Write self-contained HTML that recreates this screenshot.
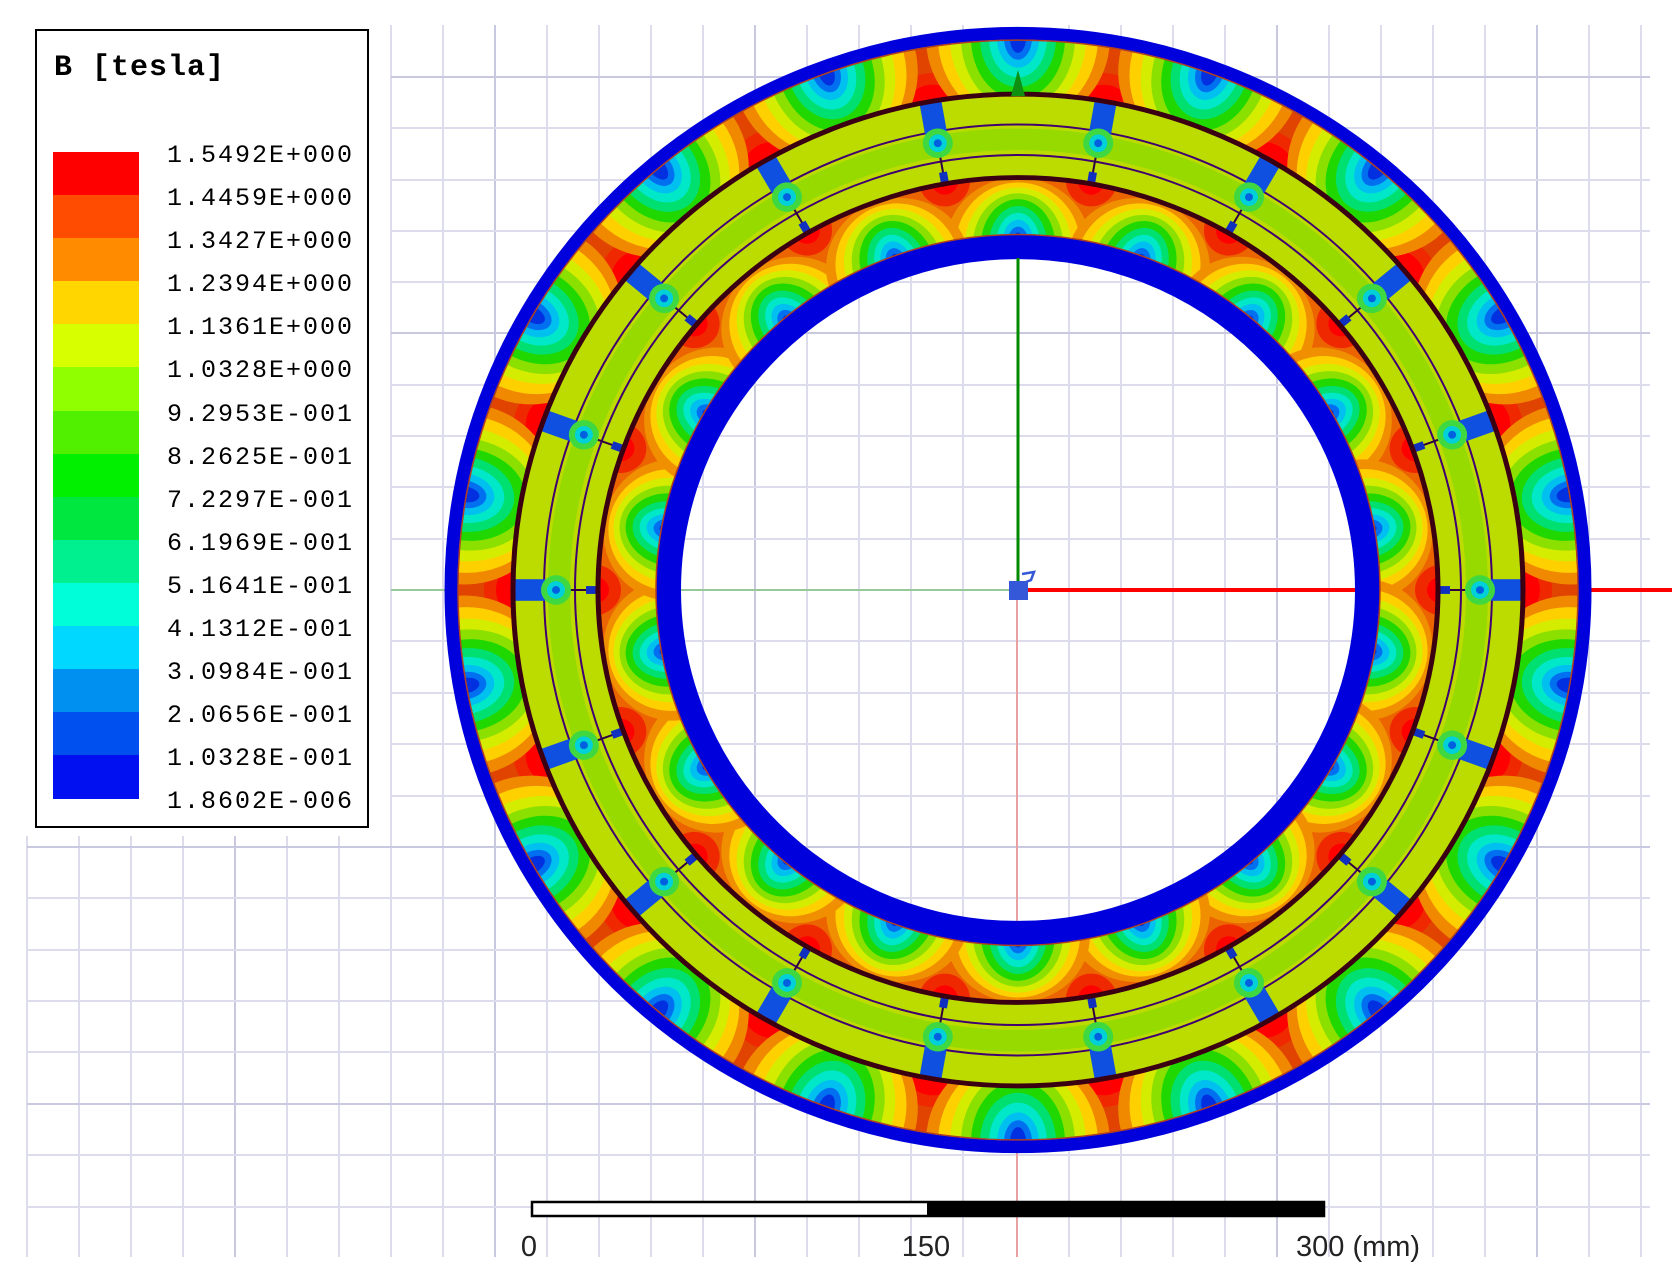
<!DOCTYPE html>
<html><head><meta charset="utf-8"><style>
html,body{margin:0;padding:0;background:#fff;}
svg{display:block;}
</style></head><body>
<svg width="1672" height="1283" viewBox="0 0 1672 1283" xmlns="http://www.w3.org/2000/svg" xmlns:xlink="http://www.w3.org/1999/xlink">
<defs>
  <clipPath id="statClip"><path clip-rule="evenodd" d="M-560,0a560,560 0 1,0 1120,0a560,560 0 1,0 -1120,0ZM-506,0a506,506 0 1,0 1012,0a506,506 0 1,0 -1012,0Z"/></clipPath>
  <clipPath id="rotClip"><path clip-rule="evenodd" d="M-419,0a419,419 0 1,0 838,0a419,419 0 1,0 -838,0ZM-362,0a362,362 0 1,0 724,0a362,362 0 1,0 -724,0Z"/></clipPath>
  <g id="sred"><ellipse cx="0" cy="-500" rx="42" ry="34" fill="#f02800"/><ellipse cx="0" cy="-500" rx="26" ry="22" fill="#ff0000"/></g>
  <g id="sspot">
    <ellipse cx="0" cy="-562" rx="92" ry="92" fill="#f08800"/>
    <ellipse cx="0" cy="-562" rx="80" ry="86" fill="#ffd000"/>
    <ellipse cx="0" cy="-562" rx="68" ry="80" fill="#d4ec00"/>
    <ellipse cx="0" cy="-562" rx="57" ry="72" fill="#8ce000"/>
    <ellipse cx="0" cy="-562" rx="47" ry="62" fill="#20d800"/>
    <ellipse cx="0" cy="-562" rx="38" ry="50" fill="#00e070"/>
    <ellipse cx="0" cy="-562" rx="29" ry="40" fill="#00e8c8"/>
    <ellipse cx="0" cy="-562" rx="21" ry="30" fill="#00c0f0"/>
    <ellipse cx="0" cy="-562" rx="14" ry="22" fill="#0070f0"/>
    <ellipse cx="0" cy="-562" rx="8" ry="15" fill="#0030e0"/>
  </g>
  <g id="rred"><ellipse cx="0" cy="-425" rx="26" ry="28" fill="#f02800"/><ellipse cx="0" cy="-425" rx="14" ry="16" fill="#ff0000"/></g>
  <g id="rspot">
    <ellipse cx="0" cy="-352" rx="72" ry="68" fill="#f09000"/>
    <ellipse cx="0" cy="-352" rx="62" ry="63" fill="#ffd000"/>
    <ellipse cx="0" cy="-352" rx="53" ry="58" fill="#d4ec00"/>
    <ellipse cx="0" cy="-352" rx="45" ry="52" fill="#8ce000"/>
    <ellipse cx="0" cy="-352" rx="37" ry="46" fill="#20d800"/>
    <ellipse cx="0" cy="-352" rx="29" ry="39" fill="#00e070"/>
    <ellipse cx="0" cy="-352" rx="22" ry="32" fill="#00e8c8"/>
    <ellipse cx="0" cy="-352" rx="16" ry="25" fill="#00c0f0"/>
    <ellipse cx="0" cy="-352" rx="11" ry="18" fill="#0070f0"/>
    <ellipse cx="0" cy="-352" rx="6" ry="12" fill="#0030e0"/>
  </g>
  <g id="blk">
    <line x1="0" y1="-502" x2="0" y2="-424" stroke="#300040" stroke-width="2"/>
    <rect x="-11" y="-503" width="22" height="30" fill="#1050e0"/>
    <circle cx="0" cy="-462" r="15" fill="#40d840"/>
    <circle cx="0" cy="-462" r="9" fill="#00d0d8"/>
    <circle cx="0" cy="-462" r="4" fill="#0060e0"/>
    <rect x="-4" y="-432" width="8" height="10" fill="#1030c0"/>
  </g>
</defs>

<g stroke="#dcdcec" stroke-width="2">
  <line x1="391" y1="25" x2="391" y2="1257"/><line x1="443" y1="25" x2="443" y2="1257"/><line x1="495" y1="25" x2="495" y2="1257" stroke="#c8c8e0"/><line x1="547" y1="25" x2="547" y2="1257"/><line x1="599" y1="25" x2="599" y2="1257"/><line x1="651" y1="25" x2="651" y2="1257"/><line x1="703" y1="25" x2="703" y2="1257"/><line x1="755" y1="25" x2="755" y2="1257" stroke="#c8c8e0"/><line x1="807" y1="25" x2="807" y2="1257"/><line x1="859" y1="25" x2="859" y2="1257"/><line x1="911" y1="25" x2="911" y2="1257"/><line x1="963" y1="25" x2="963" y2="1257"/><line x1="1069" y1="25" x2="1069" y2="1257"/><line x1="1121" y1="25" x2="1121" y2="1257"/><line x1="1173" y1="25" x2="1173" y2="1257"/><line x1="1225" y1="25" x2="1225" y2="1257"/><line x1="1277" y1="25" x2="1277" y2="1257" stroke="#c8c8e0"/><line x1="1329" y1="25" x2="1329" y2="1257"/><line x1="1381" y1="25" x2="1381" y2="1257"/><line x1="1433" y1="25" x2="1433" y2="1257"/><line x1="1485" y1="25" x2="1485" y2="1257"/><line x1="1537" y1="25" x2="1537" y2="1257" stroke="#c8c8e0"/><line x1="1589" y1="25" x2="1589" y2="1257"/><line x1="1641" y1="25" x2="1641" y2="1257"/>
  <line x1="27" y1="836" x2="27" y2="1257"/><line x1="79" y1="836" x2="79" y2="1257"/><line x1="131" y1="836" x2="131" y2="1257"/><line x1="183" y1="836" x2="183" y2="1257"/><line x1="235" y1="836" x2="235" y2="1257" stroke="#c8c8e0"/><line x1="287" y1="836" x2="287" y2="1257"/><line x1="339" y1="836" x2="339" y2="1257"/>
  <line x1="391" y1="77" x2="1650" y2="77" stroke="#c8c8e0"/><line x1="391" y1="128" x2="1650" y2="128"/><line x1="391" y1="180" x2="1650" y2="180"/><line x1="391" y1="231" x2="1650" y2="231"/><line x1="391" y1="282" x2="1650" y2="282"/><line x1="391" y1="333" x2="1650" y2="333" stroke="#c8c8e0"/><line x1="391" y1="385" x2="1650" y2="385"/><line x1="391" y1="436" x2="1650" y2="436"/><line x1="391" y1="487" x2="1650" y2="487"/><line x1="391" y1="539" x2="1650" y2="539"/><line x1="391" y1="641" x2="1650" y2="641"/><line x1="391" y1="693" x2="1650" y2="693"/><line x1="391" y1="744" x2="1650" y2="744"/><line x1="391" y1="796" x2="1650" y2="796"/>
  <line x1="27" y1="847" x2="1650" y2="847" stroke="#c8c8e0"/><line x1="27" y1="898" x2="1650" y2="898"/><line x1="27" y1="950" x2="1650" y2="950"/><line x1="27" y1="1001" x2="1650" y2="1001"/><line x1="27" y1="1052" x2="1650" y2="1052"/><line x1="27" y1="1104" x2="1650" y2="1104" stroke="#c8c8e0"/><line x1="27" y1="1155" x2="1650" y2="1155"/><line x1="27" y1="1207" x2="1650" y2="1207"/>
</g>

<line x1="391" y1="590" x2="1018" y2="590" stroke="#98c898" stroke-width="2"/>
<line x1="1017" y1="590" x2="1017" y2="1257" stroke="#e8a0a0" stroke-width="2"/>
<line x1="1018" y1="590" x2="1672" y2="590" stroke="#ff0000" stroke-width="4"/>

<g transform="translate(1018,590) scale(1,0.982)">
  <circle r="567" fill="none" stroke="#0000dc" stroke-width="13"/>
  <circle r="349.5" fill="none" stroke="#0000dc" stroke-width="25"/>
  <g clip-path="url(#statClip)">
    <rect x="-600" y="-600" width="1200" height="1200" fill="#e04400"/>
    <use xlink:href="#sred" transform="rotate(10)"/><use xlink:href="#sred" transform="rotate(30)"/><use xlink:href="#sred" transform="rotate(50)"/><use xlink:href="#sred" transform="rotate(70)"/><use xlink:href="#sred" transform="rotate(90)"/><use xlink:href="#sred" transform="rotate(110)"/><use xlink:href="#sred" transform="rotate(130)"/><use xlink:href="#sred" transform="rotate(150)"/><use xlink:href="#sred" transform="rotate(170)"/><use xlink:href="#sred" transform="rotate(190)"/><use xlink:href="#sred" transform="rotate(210)"/><use xlink:href="#sred" transform="rotate(230)"/><use xlink:href="#sred" transform="rotate(250)"/><use xlink:href="#sred" transform="rotate(270)"/><use xlink:href="#sred" transform="rotate(290)"/><use xlink:href="#sred" transform="rotate(310)"/><use xlink:href="#sred" transform="rotate(330)"/><use xlink:href="#sred" transform="rotate(350)"/>
    <use xlink:href="#sspot" transform="rotate(0)"/><use xlink:href="#sspot" transform="rotate(20)"/><use xlink:href="#sspot" transform="rotate(40)"/><use xlink:href="#sspot" transform="rotate(60)"/><use xlink:href="#sspot" transform="rotate(80)"/><use xlink:href="#sspot" transform="rotate(100)"/><use xlink:href="#sspot" transform="rotate(120)"/><use xlink:href="#sspot" transform="rotate(140)"/><use xlink:href="#sspot" transform="rotate(160)"/><use xlink:href="#sspot" transform="rotate(180)"/><use xlink:href="#sspot" transform="rotate(200)"/><use xlink:href="#sspot" transform="rotate(220)"/><use xlink:href="#sspot" transform="rotate(240)"/><use xlink:href="#sspot" transform="rotate(260)"/><use xlink:href="#sspot" transform="rotate(280)"/><use xlink:href="#sspot" transform="rotate(300)"/><use xlink:href="#sspot" transform="rotate(320)"/><use xlink:href="#sspot" transform="rotate(340)"/>
  </g>
  <g clip-path="url(#rotClip)">
    <rect x="-450" y="-450" width="900" height="900" fill="#ec6400"/>
    <use xlink:href="#rred" transform="rotate(10)"/><use xlink:href="#rred" transform="rotate(30)"/><use xlink:href="#rred" transform="rotate(50)"/><use xlink:href="#rred" transform="rotate(70)"/><use xlink:href="#rred" transform="rotate(90)"/><use xlink:href="#rred" transform="rotate(110)"/><use xlink:href="#rred" transform="rotate(130)"/><use xlink:href="#rred" transform="rotate(150)"/><use xlink:href="#rred" transform="rotate(170)"/><use xlink:href="#rred" transform="rotate(190)"/><use xlink:href="#rred" transform="rotate(210)"/><use xlink:href="#rred" transform="rotate(230)"/><use xlink:href="#rred" transform="rotate(250)"/><use xlink:href="#rred" transform="rotate(270)"/><use xlink:href="#rred" transform="rotate(290)"/><use xlink:href="#rred" transform="rotate(310)"/><use xlink:href="#rred" transform="rotate(330)"/><use xlink:href="#rred" transform="rotate(350)"/>
    <use xlink:href="#rspot" transform="rotate(0)"/><use xlink:href="#rspot" transform="rotate(20)"/><use xlink:href="#rspot" transform="rotate(40)"/><use xlink:href="#rspot" transform="rotate(60)"/><use xlink:href="#rspot" transform="rotate(80)"/><use xlink:href="#rspot" transform="rotate(100)"/><use xlink:href="#rspot" transform="rotate(120)"/><use xlink:href="#rspot" transform="rotate(140)"/><use xlink:href="#rspot" transform="rotate(160)"/><use xlink:href="#rspot" transform="rotate(180)"/><use xlink:href="#rspot" transform="rotate(200)"/><use xlink:href="#rspot" transform="rotate(220)"/><use xlink:href="#rspot" transform="rotate(240)"/><use xlink:href="#rspot" transform="rotate(260)"/><use xlink:href="#rspot" transform="rotate(280)"/><use xlink:href="#rspot" transform="rotate(300)"/><use xlink:href="#rspot" transform="rotate(320)"/><use xlink:href="#rspot" transform="rotate(340)"/>
  </g>
  <circle r="560" fill="none" stroke="#b04020" stroke-width="1.5"/>
  <circle r="362" fill="none" stroke="#b04020" stroke-width="1.5"/>
  <circle r="462.5" fill="none" stroke="#bcdc00" stroke-width="87"/>
  <circle r="459" fill="none" stroke="#96da00" stroke-width="22"/>
  <circle r="443" fill="none" stroke="#400070" stroke-width="2"/>
  <circle r="474" fill="none" stroke="#400070" stroke-width="2"/>
  <use xlink:href="#blk" transform="rotate(10)"/><use xlink:href="#blk" transform="rotate(30)"/><use xlink:href="#blk" transform="rotate(50)"/><use xlink:href="#blk" transform="rotate(70)"/><use xlink:href="#blk" transform="rotate(90)"/><use xlink:href="#blk" transform="rotate(110)"/><use xlink:href="#blk" transform="rotate(130)"/><use xlink:href="#blk" transform="rotate(150)"/><use xlink:href="#blk" transform="rotate(170)"/><use xlink:href="#blk" transform="rotate(190)"/><use xlink:href="#blk" transform="rotate(210)"/><use xlink:href="#blk" transform="rotate(230)"/><use xlink:href="#blk" transform="rotate(250)"/><use xlink:href="#blk" transform="rotate(270)"/><use xlink:href="#blk" transform="rotate(290)"/><use xlink:href="#blk" transform="rotate(310)"/><use xlink:href="#blk" transform="rotate(330)"/><use xlink:href="#blk" transform="rotate(350)"/>
  <circle r="505" fill="none" stroke="#3a0012" stroke-width="5"/>
  <circle r="420" fill="none" stroke="#3a0012" stroke-width="5"/>
</g>

<line x1="1018" y1="258" x2="1018" y2="590" stroke="#008a00" stroke-width="3"/>
<polygon points="1011,96 1025,96 1018,70" fill="#109010"/>
<rect x="1009" y="581" width="19" height="19" fill="#3558d8"/>
<path d="M1022,574 L1034,572 L1031,580 L1026,582" fill="none" stroke="#3558d8" stroke-width="2.5"/>

<rect x="36" y="30" width="332" height="797" fill="#fff" stroke="#000" stroke-width="2"/>
<text x="54" y="75" font-family="Liberation Mono, monospace" font-weight="bold" font-size="30" letter-spacing="1" fill="#000">B [tesla]</text>
<g>
<rect x="53" y="152" width="86" height="44" fill="#ff0000"/>
<rect x="53" y="195" width="86" height="44" fill="#ff4c00"/>
<rect x="53" y="238" width="86" height="44" fill="#ff8c00"/>
<rect x="53" y="281" width="86" height="44" fill="#ffd600"/>
<rect x="53" y="324" width="86" height="44" fill="#d8ff00"/>
<rect x="53" y="367" width="86" height="44" fill="#90ff00"/>
<rect x="53" y="411" width="86" height="44" fill="#50f000"/>
<rect x="53" y="454" width="86" height="44" fill="#00f000"/>
<rect x="53" y="497" width="86" height="44" fill="#00e840"/>
<rect x="53" y="540" width="86" height="44" fill="#00f090"/>
<rect x="53" y="583" width="86" height="44" fill="#00ffd8"/>
<rect x="53" y="626" width="86" height="44" fill="#00d8ff"/>
<rect x="53" y="669" width="86" height="44" fill="#0090f0"/>
<rect x="53" y="712" width="86" height="44" fill="#0050f0"/>
<rect x="53" y="755" width="86" height="44" fill="#0010f0"/>
</g>
<g font-family="Liberation Mono, monospace" font-size="25" letter-spacing="2" fill="#000">
<text x="167" y="162">1.5492E+000</text>
<text x="167" y="205">1.4459E+000</text>
<text x="167" y="248">1.3427E+000</text>
<text x="167" y="291">1.2394E+000</text>
<text x="167" y="334">1.1361E+000</text>
<text x="167" y="377">1.0328E+000</text>
<text x="167" y="421">9.2953E-001</text>
<text x="167" y="464">8.2625E-001</text>
<text x="167" y="507">7.2297E-001</text>
<text x="167" y="550">6.1969E-001</text>
<text x="167" y="593">5.1641E-001</text>
<text x="167" y="636">4.1312E-001</text>
<text x="167" y="679">3.0984E-001</text>
<text x="167" y="722">2.0656E-001</text>
<text x="167" y="765">1.0328E-001</text>
<text x="167" y="808">1.8602E-006</text>
</g>

<rect x="532" y="1202" width="792" height="14" fill="#fff" stroke="#000" stroke-width="2.5"/>
<rect x="927" y="1201" width="397" height="16" fill="#000"/>
<g font-family="Liberation Sans, Arial, sans-serif" font-size="29" fill="#222">
<text x="529" y="1256" text-anchor="middle">0</text>
<text x="926" y="1256" text-anchor="middle">150</text>
<text x="1296" y="1256">300 (mm)</text>
</g>
</svg>
</body></html>
